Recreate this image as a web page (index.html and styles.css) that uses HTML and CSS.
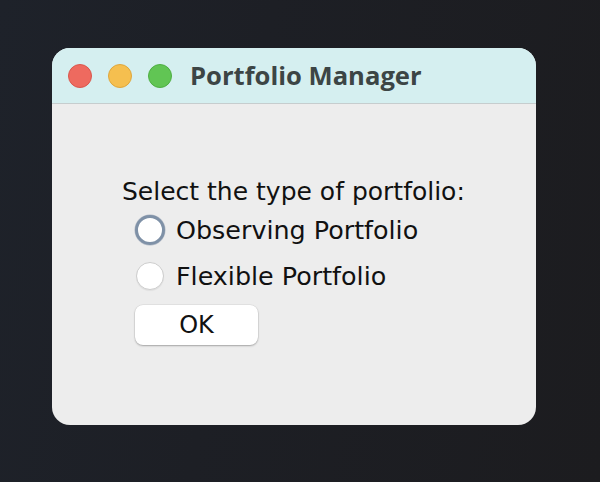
FILE: index.html
```html
<!DOCTYPE html>
<html>
<head>
<meta charset="utf-8">
<link rel="stylesheet" href="styles.css">
</head>
<body>
<div class="window">
  <div class="titlebar">
    <span class="light red"></span>
    <span class="light yellow"></span>
    <span class="light green"></span>
    <span class="title">Portfolio Manager</span>
  </div>
  <div class="content">
    <div class="prompt">Select the type of portfolio:</div>
    <div class="option"><span class="radio focused"></span><span class="label">Observing Portfolio</span></div>
    <div class="option"><span class="radio"></span><span class="label">Flexible Portfolio</span></div>
    <button class="ok">OK</button>
  </div>
</div>
</body>
</html>
```
FILE: styles.css
```css
html, body {
  margin: 0;
  padding: 0;
}
body {
  width: 600px;
  height: 482px;
  overflow: hidden;
  background: linear-gradient(100deg, #1e222a 0%, #1d1f25 40%, #1c1c1f 100%);
  padding-top: 48px;
  box-sizing: border-box;
}
.window {
  margin-left: 52px;
  width: 484px;
  height: 377px;
  border-radius: 18px;
  overflow: hidden;
  background: #ededed;
}
.titlebar {
  height: 55px;
  border-bottom: 1px solid #c6cdce;
  background: #d5eff0;
  display: flex;
  align-items: center;
  padding-left: 16px;
  gap: 16px;
}
.light {
  width: 24px;
  height: 24px;
  border-radius: 50%;
  box-sizing: border-box;
}
.red { background: #ee6a5f; border: 1px solid #d9574d; }
.yellow { background: #f5bf4f; border: 1px solid #dea63c; }
.green { background: #61c554; border: 1px solid #4fae43; }
.title {
  margin-left: 2px;
  font-family: "Open Sans", sans-serif;
  font-weight: 700;
  font-size: 25.6px;
  color: #3c4545;
  line-height: 30px;
}
.content {
  padding-top: 73px;
  padding-left: 70px;
  display: flex;
  flex-direction: column;
  align-items: flex-start;
  font-family: "DejaVu Sans", sans-serif;
  color: #111;
}
.prompt {
  font-size: 25px;
  line-height: 30px;
}
.option {
  height: 46px;
  display: flex;
  align-items: center;
  padding-left: 13px;
  gap: 11px;
  font-size: 25.4px;
  line-height: 30px;
}
.option:first-of-type {
  margin-top: 1px;
}
.radio {
  width: 30px;
  height: 30px;
  display: flex;
  align-items: center;
  justify-content: center;
}
.radio::before {
  content: "";
  width: 28px;
  height: 28px;
  box-sizing: border-box;
  border-radius: 50%;
  background: #fff;
  border: 1px solid #cdcdcd;
  box-shadow: 0 1px 1px rgba(0,0,0,0.06);
}
.radio.focused::before {
  width: 30px;
  height: 30px;
  border: 3px solid #7f91a7;
  box-shadow: 0 0 0 0.5px rgba(90,110,140,0.4);
}
.ok {
  margin-top: 6px;
  margin-left: 13px;
  width: 123px;
  height: 40px;
  border: none;
  border-radius: 8px;
  background: #fff;
  box-shadow: 0 1px 2px rgba(0,0,0,0.28), 0 0 0 0.5px rgba(0,0,0,0.08);
  font-family: "DejaVu Sans", sans-serif;
  font-size: 24px;
  line-height: 30px;
  color: #111;
  padding: 0;
}
```
